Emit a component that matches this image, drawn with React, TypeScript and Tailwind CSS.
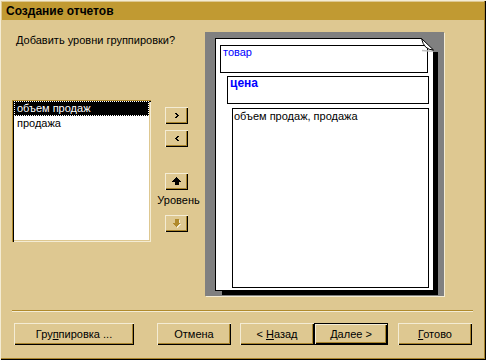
import React from "react";

const BG = "bg-[#dec891]";

function Chevron({ dir }: { dir: "r" | "l" }) {
  const rows = [0, 1, 2, 1, 0];
  return (
    <svg width="4" height="5" viewBox="0 0 4 5" shapeRendering="crispEdges">
      {rows.map((x, y) => (
        <rect key={y} x={dir === "r" ? x : 2 - x} y={y} width="2" height="1" fill="#000" />
      ))}
    </svg>
  );
}

function Arrow({ dir, disabled }: { dir: "u" | "d"; disabled?: boolean }) {
  const up = (
    <>
      <polygon points="4.5,0 9,4.5 0,4.5" />
      <rect x="2.5" y="4.5" width="4" height="3.5" />
    </>
  );
  const down = (
    <>
      <rect x="2.5" y="0" width="4" height="3.5" />
      <polygon points="0,3.5 9,3.5 4.5,8" />
    </>
  );
  return (
    <svg width="10" height="9" viewBox="0 0 10 9" shapeRendering="crispEdges">
      {disabled && (
        <g fill="#f4ecd4" transform="translate(1,1)">
          {dir === "u" ? up : down}
        </g>
      )}
      <g fill={disabled ? "#b08a2c" : "#000"}>{dir === "u" ? up : down}</g>
    </svg>
  );
}

const bevel =
  "shadow-[inset_1px_1px_0_#f4ecd4,inset_-1px_-1px_0_#000,inset_-2px_-2px_0_#a8842c]";

function SmallBtn({ children, className = "" }: { children: React.ReactNode; className?: string }) {
  return (
    <div className={`w-[23px] h-[17px] flex items-center justify-center ${BG} ${bevel} ${className}`}>
      {children}
    </div>
  );
}

function Btn({
  children,
  w,
  className = "",
  def,
}: {
  children: React.ReactNode;
  w: string;
  className?: string;
  def?: boolean;
}) {
  return (
    <div
      className={`${w} h-[22px] shrink-0 ${BG} ${className} ${
        def ? "border border-black" : ""
      }`}
    >
      <div className={`w-full h-full flex items-center justify-center text-[11px] leading-[13px] text-black ${bevel}`}>
        {children}
      </div>
    </div>
  );
}

export default function App() {
  return (
    <div
      className={`w-[486px] h-[360px] ${BG} flex flex-col overflow-hidden shadow-[inset_1px_1px_0_#f4ecd4,inset_-1px_-1px_0_#000,inset_-2px_-2px_0_#a8842c]`}
      style={{ fontFamily: '"Liberation Sans", Arial, sans-serif' }}
    >
      {/* Title bar */}
      <div className="mx-[2px] mt-[2px] h-[18px] bg-[#c19a32] flex items-center pl-[4px]">
        <span className="text-[12px] font-bold text-black leading-[14px]">Создание отчетов</span>
      </div>

      {/* Main */}
      <div className="h-[290px] flex items-start">
        <div className="w-[205px] shrink-0 flex flex-col">
          <p className="ml-[16px] mt-[14px] text-[11px] leading-[13px] text-black">
            Добавить уровни группировки?
          </p>
          <div className="ml-[12px] mt-[53px] flex items-start">
            {/* List */}
            <div className="w-[139px] h-[142px] bg-white shadow-[inset_1px_1px_0_#b08a2c,inset_2px_2px_0_#000,inset_-1px_-1px_0_#f4ecd4,inset_-2px_-2px_0_#dec891] pt-[1px] pl-[2px] pr-[2px]">
              <div className="h-[15px] bg-black text-white text-[11px] leading-[13px] border border-dotted border-white pl-[2px]">
                объем продаж
              </div>
              <div className="h-[14px] text-black text-[11px] leading-[14px] pl-[3px]">продажа</div>
            </div>
            {/* Buttons */}
            <div className="ml-[14px] w-[23px] flex flex-col items-center">
              <SmallBtn className="mt-[7px]">
                <Chevron dir="r" />
              </SmallBtn>
              <SmallBtn className="mt-[6px]">
                <Chevron dir="l" />
              </SmallBtn>
              <SmallBtn className="mt-[26px]">
                <Arrow dir="u" />
              </SmallBtn>
              <div className="mt-[4px] pl-[4px] text-[11px] leading-[13px] text-black whitespace-nowrap">
                Уровень
              </div>
              <SmallBtn className="mt-[8px]">
                <Arrow dir="d" disabled />
              </SmallBtn>
            </div>
          </div>
        </div>

        {/* Preview */}
        <div className="mt-[12px] w-[239px] h-[264px] bg-[#808080] shadow-[1px_1px_0_#f4ecd4] pt-[6px] pl-[10px]">
          <div className="relative w-[219px] h-[253px] bg-white border border-black">
            <div className="ml-[4px] mt-[6px] w-[208px] h-[28px] border border-black pl-[2px] text-[11px] leading-[13px] text-[#0000ff]">
              товар
            </div>
            <div className="ml-[11px] mt-[3px] w-[202px] h-[28px] border border-black pl-[2px] text-[12px] leading-[13px] font-bold text-[#0000ff]">
              цена
            </div>
            <div className="ml-[16px] mt-[4px] w-[197px] h-[180px] border border-black pl-[1px] pt-[1px] text-[11px] leading-[13px] text-black">
              объем продаж, продажа
            </div>
            {/* shadows */}
            <div className="absolute left-[218px] top-[13px] w-[4px] h-[243px] bg-black" />
            <div className="absolute left-[6px] top-[252px] w-[216px] h-[4px] bg-black" />
            {/* folded corner */}
            <svg
              className="absolute -top-[1px] -right-[1px]"
              width="13"
              height="14"
              viewBox="0 0 13 14"
            >
              <polygon points="0,0 13,0 13,14 12,14" fill="#808080" />
              <path d="M1 12.5 L11.5 13.2" stroke="#c0c0c0" strokeWidth="1.5" />
              <path d="M0.5 0.5 L12.5 12 Q3 12 0.5 0.5 Z" fill="#fff" stroke="#000" strokeWidth="1" />
            </svg>
          </div>
        </div>
      </div>

      {/* Separator */}
      <div className="ml-[12px] w-[461px] h-[2px] border-t border-[#b08a2c] border-b border-b-[#f4ecd4]" />

      {/* Bottom buttons */}
      <div className="mt-[11px] flex">
        <Btn w="w-[120px]" className="ml-[14px]">
          <span>
            Гру<span className="underline">п</span>пировка ...
          </span>
        </Btn>
        <Btn w="w-[74px]" className="ml-[23px]">
          Отмена
        </Btn>
        <Btn w="w-[74px]" className="ml-[9px]">
          <span>
            &lt; <span className="underline">Н</span>азад
          </span>
        </Btn>
        <Btn w="w-[74px]" def>
          <span>
            <span className="underline">Д</span>алее &gt;
          </span>
        </Btn>
        <Btn w="w-[74px]" className="ml-[10px]">
          <span>
            <span className="underline">Г</span>отово
          </span>
        </Btn>
      </div>
    </div>
  );
}
